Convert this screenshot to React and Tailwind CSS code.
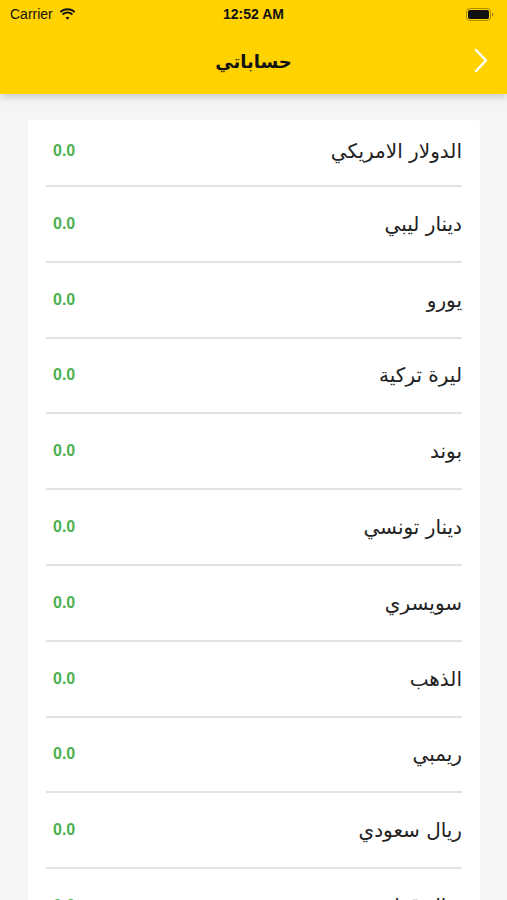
import React from "react";

const accounts = [
  "الدولار الامريكي",
  "دينار ليبي",
  "يورو",
  "ليرة تركية",
  "بوند",
  "دينار تونسي",
  "سويسري",
  "الذهب",
  "ريمبي",
  "ريال سعودي",
  "ريال قطري",
];

function Wifi() {
  return (
    <svg width="17" height="12" viewBox="0 0 17 12" fill="#111">
      <path d="M8.5 2.2c2.5 0 4.8 1 6.5 2.6l1.3-1.4C14.2 1.4 11.5.2 8.5.2S2.8 1.4.7 3.4L2 4.8c1.7-1.6 4-2.6 6.5-2.6z" />
      <path d="M8.5 5.6c1.6 0 3.1.6 4.2 1.7l1.3-1.4C12.6 4.5 10.6 3.6 8.5 3.6S4.4 4.5 3 5.9l1.3 1.4c1.1-1.1 2.6-1.7 4.2-1.7z" />
      <path d="M8.5 8.8c.8 0 1.5.3 2 .8L8.5 11.8 6.5 9.6c.5-.5 1.2-.8 2-.8z" />
    </svg>
  );
}

function Battery() {
  return (
    <svg width="28" height="13" viewBox="0 0 28 13">
      <rect x="0.5" y="0.5" width="24" height="12" rx="3.5" fill="none" stroke="#111" strokeOpacity="0.35" />
      <rect x="2" y="2" width="21" height="9" rx="2" fill="#111" />
      <path d="M26 4.5v4c.8-.3 1.4-1.1 1.4-2s-.6-1.7-1.4-2z" fill="#111" fillOpacity="0.4" />
    </svg>
  );
}

export default function App() {
  return (
    <div className="h-[900px] w-full overflow-hidden bg-[#f5f5f5] flex flex-col font-['Liberation_Sans',sans-serif]">
      {/* Header */}
      <div className="bg-[#ffd200] shadow-[0_3px_8px_rgba(0,0,0,0.18)] relative z-10">
        <div className="h-[28px] flex items-center justify-between px-[10px] relative">
          <div className="flex items-center gap-[6px] text-[14px] text-[#111]">
            <span>Carrier</span>
            <Wifi />
          </div>
          <span className="absolute left-1/2 -translate-x-1/2 text-[14px] font-bold text-[#111]">12:52 AM</span>
          <div className="pr-[3px]">
            <Battery />
          </div>
        </div>
        <div className="h-[66px] flex items-center justify-center relative">
          <h1 dir="rtl" className="text-[18px] font-bold text-[#111] font-['DejaVu_Sans',sans-serif]">حساباتي</h1>
          <svg className="absolute right-[19px] top-[20px]" width="14" height="25" viewBox="0 0 14 25" fill="none">
            <path d="M2 2l10 10.5L2 23" stroke="#fff" strokeWidth="2.5" strokeLinecap="round" strokeLinejoin="round" />
          </svg>
        </div>
      </div>

      {/* Accounts card */}
      <div className="mt-[26px] ml-[28px] w-[452px] bg-white rounded-[3px] px-[18px]">
        {accounts.map((name, i) => (
          <div key={name}>
            <div
              dir="rtl"
              className={`flex items-center justify-between ${i === 0 ? "h-[65px] pb-[4px]" : "h-[73.8px]"}`}
            >
              <span className="text-[20px] text-[#222] font-['DejaVu_Sans',sans-serif]">{name}</span>
              <span className="text-[16px] font-bold text-[#4caf50] pl-[7px]" dir="ltr">0.0</span>
            </div>
            <div className="h-[2px] bg-[#e2e2e2]" />
          </div>
        ))}
      </div>
    </div>
  );
}
